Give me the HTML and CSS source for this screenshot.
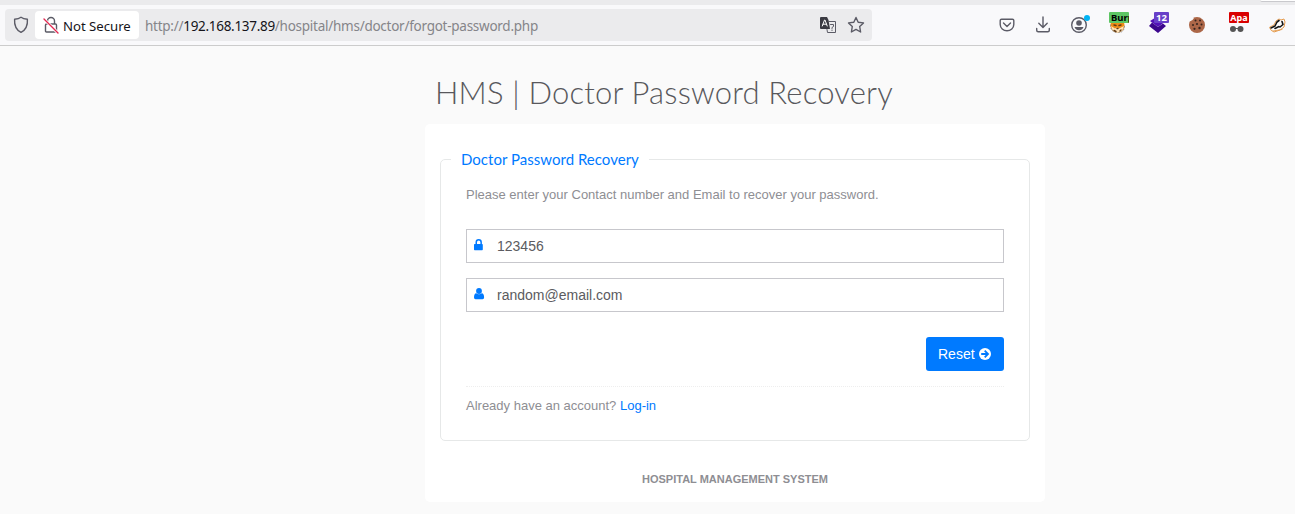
FILE: index.html
```html
<!DOCTYPE html>
<html lang="en">
<head>
<meta charset="utf-8">
<title>HMS | Doctor Password Recovery</title>
<link rel="stylesheet" href="styles.css">
</head>
<body>
<div class="tabstrip"><span class="tab-edge"></span></div>
<header class="toolbar">
  <div class="urlbar">
    <svg class="shield" width="16" height="18" viewBox="0 0 16 18"><path d="M8 1.2C6.2 2.5 3.8 3 1.6 3.2C1.2 8.500 2.800 13.600 8 16.400C13.200 13.600 14.800 8.500 14.400 3.200C12.200 3 9.800 2.500 8 1.200Z"/></svg>
    <div class="identity">
      <svg width="16" height="18" viewBox="0 0 16 18"><path d="M4.500 8V5a3.500 3.500 0 0 1 7 0V8M3.500 8h9q1 0 1 1v6q0 1-1 1h-9q-1 0-1-1V9q0-1 1-1Z"/><path class="halo" d="M1 3L15 17"/><path class="slash" d="M1 3L15 17"/></svg>
      <span class="insecure">Not Secure</span>
    </div>
    <span class="url">http://<b>192.168.137.89</b>/hospital/hms/doctor/forgot-password.php</span>
    <svg class="translate" width="16" height="16" viewBox="0 0 16 16"><path class="page" d="M9 4.500h6.500v11H7.500L7 12.500"/><path class="block" d="M1 0h6l1.500 3 1.500 9H1q-1 0-1-1V1q0-1 1-1Z"/><path class="letter" d="M2.300 9L4.500 3h.5L7.200 9M3 7.200h3.500"/><path class="page" d="M10.500 7.500h3v2l-1.500 1v1M12 13v.5"/></svg>
    <svg class="star" width="18" height="18" viewBox="0 0 18 18"><path d="M9 1.500L11.200 6.200L16.500 6.900L12.700 10.500L13.600 16L9 13.400L4.400 16L5.300 10.500L1.500 6.900L6.800 6.200Z"/></svg>
  </div>
  <nav class="actions">
    <svg width="16" height="16" viewBox="0 0 16 16"><path d="M2.500 2.200h11q1.300 0 1.300 1.300v4a6.800 6.300 0 0 1-13.600 0v-4q0-1.300 1.300-1.300ZM4.500 6l3.500 3.400L11.500 6"/></svg>
    <svg width="16" height="18" viewBox="0 0 16 18"><path d="M8 1v10M3.800 7.300L8 11.500l4.200-4.200M1.700 12.500v1.700q0 1.500 1.500 1.500h9.600q1.500 0 1.500-1.500v-1.700"/></svg>
    <svg class="account" width="20" height="20" viewBox="0 0 20 20"><circle cx="9" cy="11" r="7.300"/><g class="solid"><circle cx="9" cy="9" r="2.800"/><path d="M4.500 13h9q-1.200 3.300-4.500 3.300T4.500 13Z"/></g><circle class="notice" cx="17" cy="4" r="3"/></svg>
    <div class="extension"><svg width="20" height="22" viewBox="0 0 20 22"><circle class="orange" cx="8.500" cy="13.500" r="7"/><path class="rim" d="M1.500 13q0 7 7 7.500T15.500 13"/><path class="cream" d="M2 14l4 2.500 2-1 2 1L15 14l-2 5-4 1.500L4 19Z"/><path class="ink" d="M5 13l2 .5M10 13.500l2-.5M8 16.500h1M5 18.500l2 1M12 18l-1 1"/></svg><span class="badge green">Burp</span></div>
    <div class="extension"><svg width="20" height="22" viewBox="0 0 20 22"><path class="violet" d="M1 9l8-5 8 5-8 6Z"/><path class="purple" d="M0 14l3-3.500 6 4.500 5-3.500 3 2.500-8 7Z"/></svg><span class="badge purple-badge">12</span></div>
    <svg class="cookie" width="18" height="18" viewBox="0 0 18 18"><path class="biscuit" d="M9 1A8 8 0 1 0 17 9L16.500 6Q15 3 12 1.500Z"/><path class="bite" d="M3 1L1 5Q4 6 6 2Z"/><g class="chips"><circle cx="7.500" cy="4.500" r="1"/><circle cx="12" cy="4.500" r="1"/><circle cx="9" cy="8" r="1.100"/><circle cx="13.500" cy="8.500" r="1"/><circle cx="5" cy="9" r="1"/><circle cx="6.500" cy="12.800" r="1.100"/><circle cx="11.500" cy="12" r="1.200"/></g></svg>
    <div class="extension"><svg width="20" height="22" viewBox="0 0 20 22"><g class="glasses"><circle cx="4" cy="17" r="3"/><circle cx="11.500" cy="17" r="3"/><path d="M4 16h7v1H4z"/></g></svg><span class="badge red">Apa</span></div>
    <svg class="badger" width="18" height="16" viewBox="0 0 18 16"><path class="fur" d="M1 10L5 8l2-4 3-2 2 1L15 2l1 3-1 5-4 3-6 2-3-2Z"/><path class="ink" d="M2 11l4-2 2-4 2-1.500M6 11.500l4-2M13 4.500l1 3-3 2.500"/><path class="tongue" d="M4 14l9-1.500"/></svg>
  </nav>
</header>
<main>
  <h2>HMS | Doctor Password Recovery</h2>
  <section class="card">
    <form>
      <fieldset>
        <legend>Doctor Password Recovery</legend>
        <p class="intro">Please enter your Contact number and Email to recover your password.</p>
        <label class="field"><svg width="12" height="14" viewBox="0 0 12 14"><path fill-rule="evenodd" d="M1.500 6V4.300a3.200 3.200 0 0 1 6.400 0V6h.2q.7 0 .7.700v4.800q0 .7-.7.700H.7q-.7 0-.7-.7V6.700q0-.7.700-.7ZM3 6h3.400V4.300a1.700 1.700 0 0 0-3.400 0Z"/></svg><input type="text" value="123456"></label>
        <label class="field"><svg width="12" height="14" viewBox="0 0 12 14"><circle cx="5" cy="4" r="2.900"/><path d="M2.200 6.200q2.800 2 5.600 0 2.300.2 2.300 4.200 0 1.800-1.500 1.800H1.500Q0 12.200 0 10.400 0 6.400 2.200 6.200Z"/></svg><input type="text" value="random@email.com"></label>
        <div class="submit"><button type="button">Reset <svg width="12" height="12" viewBox="0 0 12 12"><circle cx="6" cy="6" r="6"/><path d="M2.200 6h6M5.700 2.700L9 6 5.700 9.300"/></svg></button></div>
        <div class="login">Already have an account? <a href="#">Log-in</a></div>
      </fieldset>
    </form>
    <footer>HOSPITAL MANAGEMENT SYSTEM</footer>
  </section>
</main>
</body>
</html>
```
FILE: styles.css
```css
* { box-sizing: border-box; }
body { margin: 0; height: 514px; overflow: hidden; background: #fafafa; color: #8e8e93; font: 13px/20px "Liberation Sans", Arial, sans-serif; }
svg { display: block; flex: none; }
.tabstrip { height: 5px; background: #ebebed; display: flex; justify-content: flex-end; overflow: hidden; }
.tab-edge { width: 35px; height: 2px; background: #fff; border-bottom: 1px solid #c9c9cd; border-radius: 0 0 0 4px; }
.toolbar { height: 41px; background: #f9f9fb; border-bottom: 1px solid #ccc; display: flex; align-items: center; padding-left: 5px; }
.toolbar svg { fill: none; stroke: #5b5b66; stroke-width: 1.4; stroke-linejoin: round; stroke-linecap: round; }
.urlbar { width: 867px; height: 32px; background: #ebebed; border-radius: 4px; display: flex; align-items: center; padding: 0 7px 0 8px; font: 13.5px/20px "Noto Sans", sans-serif; }
.identity { display: flex; align-items: center; width: 104px; height: 28px; margin-left: 6px; padding-left: 8px; gap: 4px; background: #fff; border-radius: 4px; color: #15141a; }
.insecure { padding-top: 2px; white-space: nowrap; font-size: 13.2px; letter-spacing: -.02px; }
.toolbar .halo { stroke: #fff; stroke-width: 3; }
.toolbar .slash { stroke: #e22850; }
.url { margin-left: 6px; margin-right: auto; padding-top: 2px; color: #858589; white-space: nowrap; letter-spacing: -.26px; }
.url b { color: #15141a; font-weight: 400; letter-spacing: -.3px; }
.toolbar .translate { margin-right: 11px; stroke-width: 1; }
.translate .block { fill: #3b3b43; stroke: none; }
.translate .letter { stroke: #fff; }
.actions { display: flex; align-items: center; margin-left: 127px; }
.actions > :nth-child(2) { margin-left: 20px; }
.actions > :nth-child(3) { margin-left: 19px; margin-top: -3px; }
.actions > :nth-child(4) { margin-left: 19px; }
.actions > :nth-child(5) { margin-left: 20px; }
.actions > :nth-child(6) { margin-left: 19px; }
.actions > :nth-child(7) { margin-left: 23px; }
.actions > :nth-child(8) { margin-left: 20px; }
.account .solid { fill: #5b5b66; stroke: none; }
.account .notice { fill: #00b3f4; stroke: none; }
.extension { position: relative; width: 20px; height: 22px; margin-top: -4px; }
.toolbar .extension svg, .toolbar .cookie { stroke: none; }
.badge { position: absolute; top: 0; left: 0; width: 20px; height: 11px; overflow: hidden; padding-left: 2px; border-radius: 1px; font: 700 9.5px/11px "Noto Sans", sans-serif; color: #fff; }
.green { background: #5dc563; color: #000; }
.purple-badge { left: 5px; width: 15px; padding: 0; text-align: center; background: #6840c8; }
.red { padding: 0; text-align: center; font-size: 9px; background: #d90000; }
.orange { fill: #ed8b16; }
.extension .rim { stroke: #87827c; stroke-width: 1; stroke-dasharray: 1 2; }
.cream { fill: #ffe3b8; }
.extension .ink { stroke: #603a15; }
.violet { fill: #5311b8; }
.purple { fill: #3c078d; }
.biscuit { fill: #ac6748; }
.bite { fill: #f9f9fb; }
.chips { fill: #38241e; }
.glasses { fill: #555; }
.fur { fill: #fff; stroke: #e59a4c; stroke-width: 1; }
.badger .ink { stroke: #161616; stroke-width: 1.6; }
.badger .tongue { stroke: #e5a45e; stroke-width: 1; }
main { width: 620px; margin-left: 425px; padding-top: 30px; }
h2 { margin: 0 0 15px 10px; height: 33px; color: #58585c; font: 300 31px/33px Lato, sans-serif; letter-spacing: .18px; white-space: nowrap; }
.card { height: 378px; padding: 26px 15px 0; background: #fff; border-radius: 5px; }
fieldset { margin: 0; padding: 16px 25px 0; height: 291px; min-width: 0; border: 1px solid #e6e8e8; border-radius: 5px; }
legend { width: 198px; height: 19px; margin-left: -15px; padding: 0 10px; color: #007aff; font: 15px/19px Lato, sans-serif; letter-spacing: .02px; white-space: nowrap; }
.intro { margin: 0 0 24px; }
.field { display: flex; align-items: center; height: 34px; margin-bottom: 15px; padding-left: 7px; border: 1px solid #c7c7cc; background: #fff; }
.field svg { fill: #007aff; margin-top: -2px; }
input { width: 480px; margin-left: 11px; padding: 0; border: 0; outline: 0; background: none; color: #5b5b60; font: 14px/20px "Liberation Sans", Arial, sans-serif; }
.submit { display: flex; justify-content: flex-end; padding-top: 10px; margin-bottom: 15px; }
button { display: flex; align-items: center; gap: 4px; width: 78px; height: 34px; padding: 0 0 0 12px; border: 0; border-radius: 3px; background: #007aff; color: #fff; font: 14px/20px "Liberation Sans", Arial, sans-serif; }
button svg { fill: #fff; }
button path { fill: none; stroke: #007aff; stroke-width: 1.800; }
.login { padding-top: 9px; border-top: 1px dotted #eee; }
a { color: #007aff; text-decoration: none; }
footer { margin-top: 28px; text-align: center; font-size: 11px; font-weight: 700; }
```
